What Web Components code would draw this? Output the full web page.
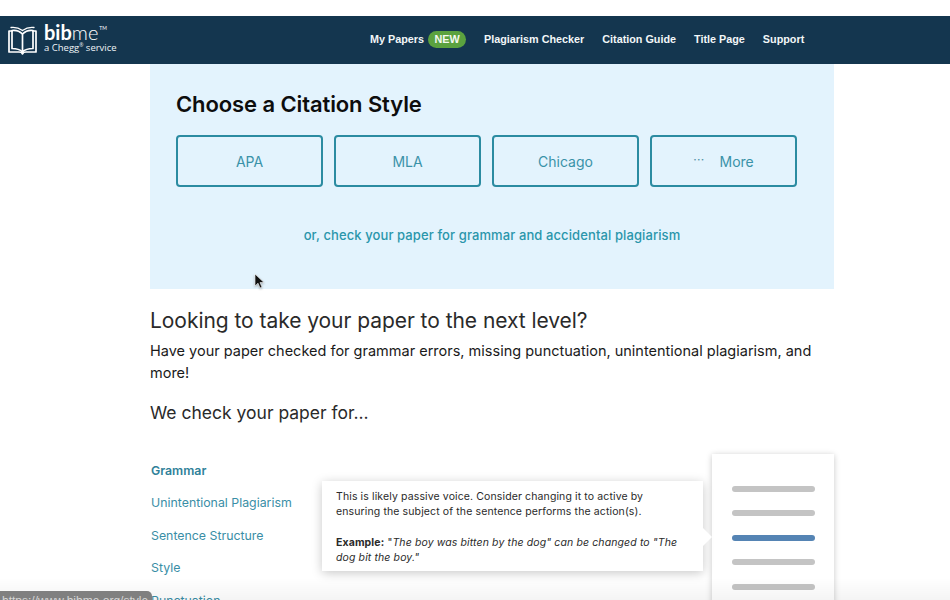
<!DOCTYPE html>
<html lang="en">
<head>
<meta charset="utf-8">
<title>BibMe</title>
<style>
  html,body{ margin:0; height:600px; overflow:hidden; background:#fff; }
  body{ font-family:Inter,"Liberation Sans",sans-serif; color:#222; padding-top:16px; box-sizing:border-box; }
</style>
</head>
<body>
<bm-header></bm-header>
<bm-main>
  <bm-hero title="Choose a Citation Style">
    <bm-style-btn>APA</bm-style-btn>
    <bm-style-btn>MLA</bm-style-btn>
    <bm-style-btn>Chicago</bm-style-btn>
    <bm-style-btn more>More</bm-style-btn>
  </bm-hero>
  <bm-promo></bm-promo>
  <bm-checks></bm-checks>
</bm-main>
<bm-fade></bm-fade>
<bm-cursor></bm-cursor>
<bm-status>https://www.bibme.org/style</bm-status>

<script>
(function(){
  function define(name, css, html){
    customElements.define(name, class extends HTMLElement {
      constructor(){
        super();
        this.attachShadow({mode:'open'});
        const get = k => this.getAttribute(k) || '';
        this.shadowRoot.innerHTML = '<style>' + css + '</style>' + html.replace(/\{\{(\w+)\}\}/g, (m,k)=>get(k));
      }
    });
  }

  // top nav
  define('bm-header', `
    :host{ display:flex; align-items:center; height:48px; background:#14364f; color:#fff; position:relative; }
    .logo{ display:flex; align-items:center; margin-left:8px; width:362px; flex:none; }
    .logo svg{ width:30px; height:30px; flex:none; }
    .word{ margin:0 0 2px 6px; display:flex; flex-direction:column; }
    .bib{ font:700 20px/15px Lato,"Open Sans",sans-serif; display:flex; align-items:flex-start; }
    .bib span{ font-weight:300; }
    .bib sup{ font-size:5px; line-height:6px; font-weight:400; margin-left:1px; }
    .tag{ font:400 9.500px/10px "Open Sans","Liberation Sans",sans-serif; margin-top:3px; color:#eef3f6; white-space:nowrap; }
    .tag sup{ font-size:5px; line-height:0; }
    nav{ display:flex; align-items:center; gap:18px; margin-bottom:2px; font:700 10.800px/16px "Liberation Sans",sans-serif; color:#f2f6f8; }
    .new{ display:inline-block; background:#5ba23f; color:#f4f9f1; border-radius:9px; height:17px; line-height:17px; width:38px; text-align:center; margin-left:1px; }
    a{ white-space:nowrap; }
  `, `
    <div class="logo">
      <svg viewBox="0 0 30 30" fill="none" stroke="#fff" stroke-width="1.700" stroke-linejoin="round" stroke-linecap="round">
        <path d="M4 6H1v21h10c2 0 3 .5 3.500 2 .5-1.500 1.500-2 3.500-2h10V6h-3"/>
        <path d="M14.500 9C12 6.500 8 5 4 5.500V23.500C8 23.500 12 24.500 14.500 27"/>
        <path d="M14.500 9C17 6.500 21 5 25 5.500V23.500C21 23.500 17 24.500 14.500 27z"/>
        <path d="M14.500 5.500C18 3 22 2 26 2.500M14.500 5.500C11 3 7 2 3 2.500" stroke-width="1.300"/>
      </svg>
      <div class="word">
        <div class="bib">bib<span>me</span><sup>TM</sup></div>
        <div class="tag">a Chegg<sup>®</sup> service</div>
      </div>
    </div>
    <nav>
      <a>My Papers <span class="new">NEW</span></a>
      <a>Plagiarism Checker</a>
      <a>Citation Guide</a>
      <a>Title Page</a>
      <a>Support</a>
    </nav>
  `);

  // centred column
  define('bm-main', `
    :host{ display:block; width:684px; margin-left:150px; }
  `, `<slot></slot>`);

  define('bm-hero', `
    :host{ display:block; background:#e3f3fd; height:225px; box-sizing:border-box; padding:26px 37px 0 26px; }
    h1{ margin:0; font:600 22px/28px Inter,"Liberation Sans",sans-serif; color:#0d0d0d; letter-spacing:-.1px; }
    .row{ display:flex; gap:11px; margin-top:17px; }
    p{ margin:39px 0 0; text-align:center; font:500 13px/18px Inter,"Liberation Sans",sans-serif; color:#2a96ab; padding-left:11px; letter-spacing:.1px; }
  `, `
    <h1>{{title}}</h1>
    <div class="row"><slot></slot></div>
    <p>or, check your paper for grammar and accidental plagiarism</p>
  `);

  customElements.define('bm-style-btn', class extends HTMLElement {
    constructor(){
      super();
      const dots = this.hasAttribute('more') ? '<span class="dots">···</span>' : '';
      this.attachShadow({mode:'open'}).innerHTML = `<style>
        :host{ flex:1; display:flex; align-items:center; justify-content:center; height:52px; box-sizing:border-box;
          border:2px solid #2b8ba1; border-radius:4px; color:#3a92a8; font:400 14px/18px Inter,"Liberation Sans",sans-serif; padding-top:1px; }
        .dots{ margin-right:15px; font-size:12px; position:relative; top:-2px; color:#4f8ea3; letter-spacing:.3px; }
      </style>${dots}<slot></slot>`;
    }
  });

  define('bm-promo', `
    :host{ display:block; padding-top:18px; }
    h2{ margin:0; font:400 21px/27px Inter,"Liberation Sans",sans-serif; color:#2a2a2a; letter-spacing:-.05px; }
    p{ margin:5.500px 0 0; font:400 14.500px/22px Inter,"Liberation Sans",sans-serif; color:#1a1a1a; }
    h3{ margin:17.500px 0 0; font:400 17.500px/24px Inter,"Liberation Sans",sans-serif; color:#2a2a2a; }
  `, `
    <h2>Looking to take your paper to the next level?</h2>
    <p>Have your paper checked for grammar errors, missing punctuation, unintentional plagiarism, and more!</p>
    <h3>We check your paper for...</h3>
  `);

  // feature list, sample tooltip and paper
  define('bm-checks', `
    :host{ display:flex; position:relative; margin-top:29px; height:200px; }
    ul{ list-style:none; margin:0; padding:9px 0 0 1px; width:171px; flex:none; font:400 12.350px/16px Inter,"Liberation Sans",sans-serif; color:#3a8ea6; }
    li{ margin-bottom:16.400px; white-space:nowrap; }
    li.on{ font-weight:600; color:#2f8199; }
    .tip{ flex:none; box-sizing:border-box; width:381px; height:90px; margin-top:27px; padding:7.500px 14px; background:#fff;
      box-shadow:0 2px 10px rgba(0,0,0,.22); font:400 10.500px/15.400px Inter,"Liberation Sans",sans-serif; color:#2a2a2a; position:relative; letter-spacing:.12px; }
    .tip p{ margin:0 0 15.400px; }
    .tip::after{ content:""; position:absolute; right:-9px; top:47px; border-left:9px solid #fff; border-top:9px solid transparent; border-bottom:9px solid transparent; }
    .paper{ flex:none; margin-left:9px; width:122px; height:200px; box-sizing:border-box; padding:32px 19px 0 20px; background:#fff;
      box-shadow:0 1px 6px rgba(0,0,0,.22); display:flex; flex-direction:column; gap:18.400px; }
    .paper i{ display:block; height:6px; border-radius:3px; background:#c4c4c4; }
    .paper i.on{ background:#5584b4; }
  `, `
    <ul>
      <li class="on">Grammar</li>
      <li>Unintentional Plagiarism</li>
      <li>Sentence Structure</li>
      <li>Style</li>
      <li>Punctuation</li>
    </ul>
    <div class="tip">
      <p>This is likely passive voice. Consider changing it to active by ensuring the subject of the sentence performs the action(s).</p>
      <b>Example:</b> "<em>The boy was bitten by the dog" can be changed to "The dog bit the boy."</em>
    </div>
    <div class="paper"><i></i><i></i><i class="on"></i><i></i><i></i></div>
  `);

  // overlays from the screen recording
  define('bm-fade', `
    :host{ position:fixed; left:0; right:0; bottom:0; height:22px; display:block; pointer-events:none;
      background:linear-gradient(to bottom, rgba(0,0,0,0), rgba(0,0,0,.045)); }
  `, ``);

  define('bm-cursor', `
    :host{ position:fixed; left:254px; top:273px; width:11px; height:17px; display:block; }
    svg{ display:block; filter:drop-shadow(0 1px 1px rgba(0,0,0,.3)); }
  `, `<svg width="11" height="17" viewBox="0 0 11 17"><path d="M1 1v12l3-2.800 2 4.800 2-.8-2-4.600h4z" fill="#111" stroke="#fff" stroke-width=".6"/></svg>`);

  define('bm-status', `
    :host{ position:fixed; left:0; top:591px; width:152px; height:9px; overflow:hidden; background:#808080; border-radius:0 5px 0 0;
      color:#d6d6d6; font:400 12px/20px "Liberation Sans",sans-serif; padding-left:2px; box-sizing:border-box; white-space:nowrap; }
  `, `<slot></slot>`);
})();
</script>
</body>
</html>
